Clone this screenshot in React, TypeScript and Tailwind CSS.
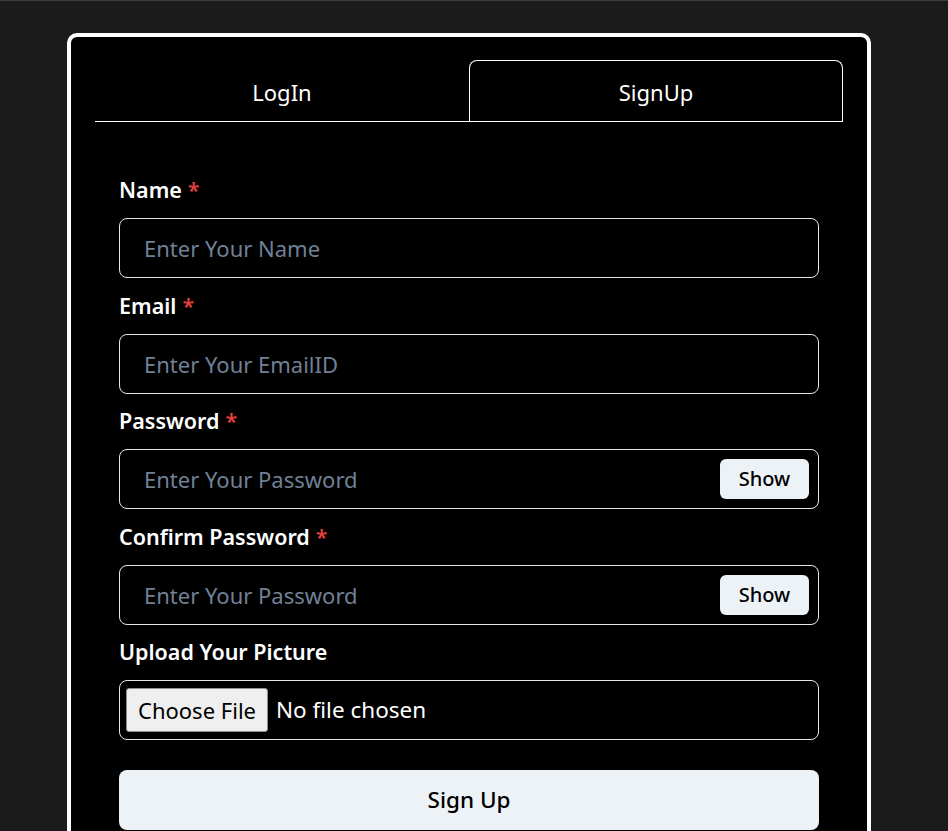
import { useState } from 'react'

const font = { fontFamily: '"Noto Sans", "Open Sans", sans-serif' }

function Field({
  label,
  placeholder,
  required,
  password,
}: {
  label: string
  placeholder: string
  required?: boolean
  password?: boolean
}) {
  const [show, setShow] = useState(false)
  return (
    <div className="flex flex-col">
      <label className="h-7 mb-[14px] text-[21.5px] leading-7 font-semibold text-white">
        {label}
        {required && <span className="ml-1.5 text-[#e53e3e]">*</span>}
      </label>
      <div className="relative">
        <input
          type={password && !show ? 'password' : 'text'}
          placeholder={placeholder}
          className="w-full h-[60px] rounded-lg border border-[#e2e8f0] bg-black pl-6 pr-28 text-[22px] text-white placeholder:text-[#718096] outline-none"
        />
        {password && (
          <button
            onClick={() => setShow(!show)}
            className="absolute right-[10px] top-[10px] h-10 w-[89px] rounded-md bg-[#edf2f7] text-[20px] font-medium text-black"
          >
            {show ? 'Hide' : 'Show'}
          </button>
        )}
      </div>
    </div>
  )
}

export default function App() {
  const [tab, setTab] = useState<'login' | 'signup'>('signup')

  return (
    <div className="h-[831px] bg-[#1b1b1b] border-t border-[#3d3d3d] px-[67px] pt-8 overflow-hidden" style={font}>
      <div className="w-[804px] rounded-[10px] border-4 border-white bg-black px-6 pt-[23px] pb-10">
        {/* Tabs */}
        <div className="flex border-b border-white">
          <button
            onClick={() => setTab('login')}
            className={`flex-1 h-[61px] pt-[2px] text-[22px] text-white rounded-t-lg border border-b-0 ${
              tab === 'login' ? 'border-white' : 'border-transparent'
            }`}
          >
            LogIn
          </button>
          <button
            onClick={() => setTab('signup')}
            className={`flex-1 h-[61px] pt-[2px] text-[22px] text-white rounded-t-lg border border-b-0 ${
              tab === 'signup' ? 'border-white' : 'border-transparent'
            }`}
          >
            SignUp
          </button>
        </div>

        {/* Form */}
        <div className="px-6 pt-[54px] flex flex-col gap-[13.5px]">
          <Field label="Name" placeholder="Enter Your Name" required />
          <Field label="Email" placeholder="Enter Your EmailID" required />
          <Field label="Password" placeholder="Enter Your Password" required password />
          <Field label="Confirm Password" placeholder="Enter Your Password" required password />

          <div className="flex flex-col">
            <label className="h-7 mb-[14px] text-[21.5px] leading-7 font-semibold text-white">
              Upload Your Picture
            </label>
            <div className="h-[60px] rounded-lg border border-[#e2e8f0] flex items-center pl-[6px]">
              <span className="h-[44px] px-[11px] flex items-center rounded-[3px] border border-[#8f8f8f] bg-[#efefef] text-[22px] text-black">
                Choose File
              </span>
              <span className="ml-[8px] text-[22.5px] text-white">No file chosen</span>
            </div>
          </div>

          <button className="mt-[16px] h-[60px] w-full rounded-lg bg-[#edf2f7] text-[22.5px] font-medium text-black">
            Sign Up
          </button>
        </div>
      </div>
    </div>
  )
}
